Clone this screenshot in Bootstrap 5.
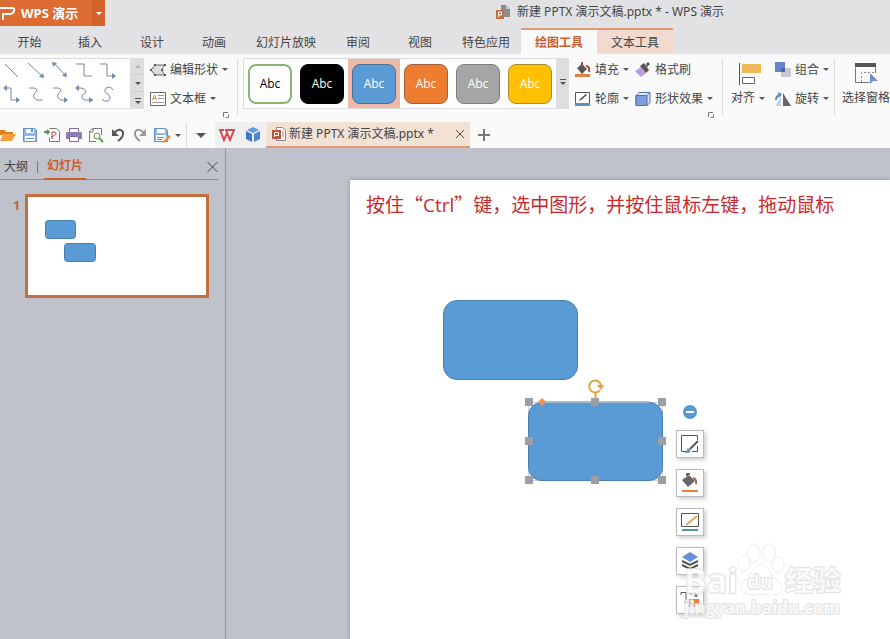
<!DOCTYPE html>
<html lang="zh-CN">
<head>
<meta charset="utf-8">
<meta name="viewport" content="width=device-width, initial-scale=1">
<title>新建 PPTX 演示文稿.pptx - WPS 演示</title>
<link href="https://cdn.jsdelivr.net/npm/bootstrap@5.3.0/dist/css/bootstrap.min.css" rel="stylesheet">
<style>
body{font-family:"Noto Sans","Noto Sans CJK SC",sans-serif;font-size:12px;line-height:16px;color:#444;background:#bfc1cb}
button{font:inherit;color:inherit;background:none;border:0;padding:0;white-space:nowrap}
svg{display:block;flex:none}
.titlebar{height:28px;background:#e2e2e5}
.brand{height:26px;background:#dd6c32;color:#fff;font-weight:700;font-size:13px}
.brand-name{width:92px;gap:4px}
.brand-drop{width:13px;height:26px;background:#d4632b}
.doc-title{margin-left:391px;gap:6px;height:24px}
.menus{background:#e2e2e5;height:26px}
.menus button{width:62px;height:26px;flex:none;border-top:2px solid transparent;padding-top:2px}
.menus .w-first{width:59px}
.menus .w-mid{width:70px}
.menus .w-long{width:82px}
.menus .ctx{width:76px;border-top-color:#df9b76;background:#f2dace}
.menus .ctx.active{background:#fafafa;color:#c9602c;font-weight:700}
.ribbon{background:#fafafa;height:68px;padding-top:4px}
.boxed{height:51px;background:#fff;border:1px solid #dcdcdf}
.steps{width:13px;height:51px;background:#dedee0}
.steps button{height:17px;width:13px;border-bottom:1px solid #cfcfd2}
.caret{width:0;height:0;border:3px solid transparent;border-top-color:#555;border-bottom:0;flex:none}
.caret.big{border-width:5px 5px 0}
.caret.up{border:3px solid transparent;border-top:0;border-bottom-color:#b4b4b8}
.caret.light{border-top-color:#fff}
.caret.bar{position:relative}
.caret.bar::before{content:"";position:absolute;left:-3px;top:-6px;width:6px;height:1px;background:#555}
.cmds{gap:6px}
.cmds-edit{width:79px;padding-left:6px}
.cmds-fill{width:60px;padding-left:0;margin-left:6px}
.cmds-effect{width:73px}
.cmds-group{width:59px}
.cmd{display:flex;align-items:center;gap:4px;height:23px}
.vsep{width:1px;height:58px;background:#dcdcdf;flex:none}
.gallery{margin-left:5px}
.swatch{width:52px;height:49px;flex:none;display:flex;align-items:center;justify-content:center;font-family:"Open Sans",sans-serif}
.swatch span{width:44px;height:40px;border-radius:8px;border:1px solid #6f7681;color:#fff;display:flex;align-items:center;justify-content:center}
.swatch.chosen{background:#efb9a7}
.sw-white span{background:#fff;color:#000;border:2px solid #8bb571}
.sw-black span{background:#000;border-color:#000}
.sw-blue span{background:#5b9bd5;border-color:#4a7198}
.sw-orange span{background:#ed7d31;border-color:#a1633d}
.sw-gray span{background:#a5a5a5;border-color:#7e7e7e}
.sw-gold span{background:#ffc000;border-color:#a88a34}
.launcher{align-self:flex-end;margin-bottom:4px}
.quick{height:26px;background:#fafafa}
.quick-tools{gap:6px;width:186px;flex:none}
.saveas{gap:4px}
.docs{background:#f0f0f2;padding-left:4px;gap:10px;width:51px}
.doc-tab{width:204px;height:26px;background:#f1e2d5;border-bottom:2px solid #dc9a74;padding:0 6px;gap:3px}
.outline{width:226px;border-right:1px solid #9497a3;flex:none}
.outline-tabs{height:32px;padding:3px 0 0 4px;margin-right:7px;border-bottom:1px solid #888b97}
.outline-tabs button{height:29px;padding-top:4px}
.outline-tabs .active{color:#c9602c;font-weight:700;padding:4px 3px 0;border-bottom:2px solid #c9602c}
.bar-mark{width:1px;height:12px;background:#777a85;margin:4px 6px 0 9px}
.thumb{height:104px;border:3px solid #c4703e;background:#fff;width:184px}
.thumb-row{padding-top:14px}
.thumb-num{width:25px;padding:4px 5px 0 0;color:#c0643a;font-weight:700;text-align:right}
.desk{padding:32px 0 0 124px}
.slide{background:#fff;box-shadow:0 0 4px #8b8e99}
.caption-line{font-family:"Noto Sans CJK SC",sans-serif;font-size:19px;line-height:26px;color:#c9282d;padding:11px 0 0 16px;white-space:nowrap}
.caption-line span{font-family:"Open Sans",sans-serif}
.box-shape{position:absolute;left:93px;top:120px;width:135px;height:80px;border-radius:14px;background:#5b9bd5;border:1px solid #4a7eae}
.picked{position:absolute;left:174px;top:196px}
.floaters{position:absolute;left:326px;top:225px;gap:11px}
.floaters .tool{width:28px;height:28px;background:#fff;border:1px solid #b9bbc0;box-shadow:2px 2px 4px #ccc;display:flex;align-items:center;justify-content:center}
.wmark{position:absolute;left:330px;top:358px;font-family:"Open Sans","Noto Sans CJK SC",sans-serif;font-weight:700;pointer-events:none}
</style>
<script src="https://cdn.jsdelivr.net/npm/bootstrap@5.3.0/dist/js/bootstrap.bundle.min.js"></script>
</head>
<body class="d-flex flex-column min-vh-100 overflow-hidden">
<header>
  <div class="titlebar d-flex align-items-start text-nowrap">
    <div class="brand d-flex align-items-center flex-shrink-0">
      <div class="brand-name d-flex align-items-center">
        <svg width="17" height="16" viewBox="0 0 17 16" fill="none" stroke="#fff" stroke-width="2"><path d="M0 3h12q3 0 2 3t-4 3H3v6"/></svg>
        <span>WPS 演示</span>
      </div>
      <button class="brand-drop d-flex align-items-center justify-content-center" aria-label="菜单"><i class="caret light"></i></button>
    </div>
    <div class="doc-title d-flex align-items-center">
      <svg width="15" height="16" viewBox="0 0 15 16"><path d="M5 1h5l4 4v8H5z" fill="#888b90"/><path d="M10 1v4h4" fill="#c9cbd0"/><path d="M0 6h8v9H0z" fill="#c96f42"/><path d="M2.500 13V8h3v3h-3" fill="none" stroke="#fff"/></svg>
      <span>新建 PPTX 演示文稿.pptx * - WPS 演示</span>
    </div>
  </div>
  <nav class="menus d-flex" aria-label="主菜单">
    <button class="w-first">开始</button><button>插入</button><button>设计</button><button>动画</button><button class="w-long">幻灯片放映</button><button>审阅</button><button>视图</button><button class="w-mid">特色应用</button><button class="ctx active">绘图工具</button><button class="ctx">文本工具</button>
  </nav>
  <div class="ribbon d-flex align-items-start">
    <div class="boxed border-start-0 flex-shrink-0">
      <svg width="130" height="49" viewBox="0 0 130 49" fill="none" stroke="#7486a8"><path d="M5 5l13 13M28 4l14 13M55 5l10 11M76 5h8v12h8M100 5h7v12h8M5 29h6v12h8M29 29h5q5 1 1 5t2 7h6M53 29h5q5 1 1 5t2 7h5M78 29h3q8 2 3 6t1 6h8M113 31q-2-4-7-2-3 4 2 6 4 5 0 7-4 1-6-2"/><path d="M44 19l-5-1 4-4zM52 3l5 1-4 4zM67 18l-5-1 4-4zM116 17l-4-3v6zM3 29l4-3v6zM20 41l-4-3v6zM68 41l-4-3v6zM75 29l4-3v6zM93 41l-4-3v6z" fill="#7489ad" stroke="none"/></svg>
    </div>
    <div class="steps d-flex flex-column flex-shrink-0">
      <button class="d-flex align-items-center justify-content-center" aria-label="上一行"><i class="caret up"></i></button>
      <button class="d-flex align-items-center justify-content-center" aria-label="下一行"><i class="caret"></i></button>
      <button class="d-flex align-items-center justify-content-center border-0 pt-1" aria-label="更多形状"><i class="caret bar"></i></button>
    </div>
    <div class="cmds cmds-edit d-flex flex-column flex-shrink-0">
      <button class="cmd"><svg width="16" height="14" viewBox="0 0 16 14"><path d="M1 7l4-5h10q-5 5 0 10H5z" fill="#dcdde2" stroke="#666"/><path d="M4 1h2v2H4zM14 1h2v2h-2zM4 11h2v2H4zM14 11h2v2h-2zM0 6h2v2H0zM11 6h2v2h-2z" fill="#555"/></svg>编辑形状<i class="caret"></i></button>
      <button class="cmd"><svg width="16" height="14" viewBox="0 0 16 14"><path d="M.5.5h15v13H.5z" fill="#fff" stroke="#666"/><path d="M2.500 8l2-5 2 5M3 6.500h3" fill="none" stroke="#dc8b45"/><path d="M8 3.500h6M8 6.500h6M2 10.500h12" stroke="#999"/></svg>文本框<i class="caret"></i></button>
    </div>
    <button class="launcher flex-shrink-0" aria-label="形状设置"><svg width="6" height="6" viewBox="0 0 6 6" fill="none" stroke="#777"><path d="M.5 5V.5H5M5.500 2.500v3h-3"/></svg></button>
    <div class="vsep ms-2"></div>
    <div class="boxed gallery d-flex flex-shrink-0 border-end-0">
      <button class="swatch sw-white"><span>Abc</span></button><button class="swatch sw-black"><span>Abc</span></button><button class="swatch sw-blue chosen"><span>Abc</span></button><button class="swatch sw-orange"><span>Abc</span></button><button class="swatch sw-gray"><span>Abc</span></button><button class="swatch sw-gold"><span>Abc</span></button>
    </div>
    <button class="steps d-flex align-items-center justify-content-center flex-shrink-0" aria-label="更多样式"><i class="caret bar"></i></button>
    <div class="cmds cmds-fill d-flex flex-column flex-shrink-0">
      <button class="cmd"><svg width="16" height="16" viewBox="0 0 16 16"><path d="M2 6l5-4 5 5-5 5z" fill="#555"/><path d="M7 3V0M11 4q4 0 3 6" fill="none" stroke="#a54c38" stroke-width="2"/><path d="M0 12h15v3H0z" fill="#e28042"/></svg>填充<i class="caret"></i></button>
      <button class="cmd"><svg width="16" height="16" viewBox="0 0 16 16"><path d="M.5 12V1.500h14V12" fill="#fff" stroke="#555"/><path d="M4 10l1-2 6-5 1 1-6 5z" fill="#444"/><path d="M0 12h15v3H0z" fill="#5793bd"/></svg>轮廓<i class="caret"></i></button>
    </div>
    <div class="cmds cmds-effect d-flex flex-column flex-shrink-0">
      <button class="cmd"><svg width="16" height="16" viewBox="0 0 16 16"><path d="M0 9l6-4 5 6-5 4z" fill="#bd9bdd"/><path d="M5 4l4-3 5 7-3 3zM11 2l2-2 2 2-3 3z" fill="#555"/></svg>格式刷</button>
      <button class="cmd"><svg width="16" height="16" viewBox="0 0 16 16"><path d="M1 4.500l3-3h11v10l-3 3H1z" fill="#dfe8fa" stroke="#536da6"/><path d="M1 4.500h11v10H1z" fill="#7d9de1" stroke="#536da6"/><path d="M12 4.500l3-3" stroke="#536da6"/></svg>形状效果<i class="caret"></i></button>
    </div>
    <button class="launcher flex-shrink-0 me-2" aria-label="效果设置"><svg width="6" height="6" viewBox="0 0 6 6" fill="none" stroke="#777"><path d="M.5 5V.5H5M5.500 2.500v3h-3"/></svg></button>
    <div class="vsep"></div>
    <button class="flex-shrink-0 text-start ps-2 pt-1" style="width:52px">
      <svg class="ms-2" width="24" height="24" viewBox="0 0 24 24"><path d="M.5 1v22" stroke="#555"/><path d="M3 2h19v9H3z" fill="#efb857"/><path d="M3.500 15.500h12v6h-12z" fill="#fff" stroke="#666"/></svg>
      <span class="d-flex align-items-center gap-1 pt-1">对齐<i class="caret"></i></span>
    </button>
    <div class="cmds cmds-group d-flex flex-column flex-shrink-0">
      <button class="cmd"><svg width="16" height="16" viewBox="0 0 16 16"><path d="M6 6h10v9H6z" fill="#c6c8cd"/><path d="M0 0h10v10H0z" fill="#6484d2"/><path d="M6 6h4v4H6z" fill="#4865a5"/></svg>组合<i class="caret"></i></button>
      <button class="cmd"><svg width="16" height="16" viewBox="0 0 16 16"><path d="M8 2v13h8z" fill="#666"/><path d="M6 6v9H0z" fill="#b9d4ee"/><path d="M1 9q0-4 4-5" fill="none" stroke="#4f8cc3" stroke-width="2"/><path d="M3 1l4 2-3 4z" fill="#4f8cc3"/></svg>旋转<i class="caret"></i></button>
    </div>
    <div class="vsep"></div>
    <button class="flex-shrink-0 pt-1" style="width:62px">
      <svg class="mx-auto" width="24" height="24" viewBox="0 0 24 24"><path d="M1.500 5.500V20.500h14M21.500 5v6" fill="none" stroke="#777"/><path d="M1 1h21v4H1z" fill="#555"/><path d="M7.500 20V10.500H21" fill="none" stroke="#888" stroke-dasharray="2 2"/><path d="M16 11v11l3-3h5z" fill="#6f8fd0"/></svg>
      <span class="d-block pt-1">选择窗格</span>
    </button>
  </div>
  <div class="quick d-flex align-items-center">
    <div class="quick-tools d-flex align-items-center">
      <button aria-label="打开"><svg width="16" height="16" viewBox="0 0 16 16"><path d="M0 3h5l1 2h7v3H0z" fill="#e47d1c"/><path d="M3 7h13l-4 7H0z" fill="#f7a13e"/></svg></button>
      <button aria-label="保存"><svg width="16" height="16" viewBox="0 0 16 16"><path d="M1.500 1.500h11l2 2v11h-13z" fill="#8fb9e5" stroke="#5f92ca"/><path d="M4 2h8v4H4zM3 9h10v5H3z" fill="#fff"/><path d="M9 2h2v3H9zM4 11h8v1H4z" fill="#5f92ca"/></svg></button>
      <button aria-label="输出为PDF"><svg width="16" height="16" viewBox="0 0 16 16"><path d="M5.500 2V1.500h7l3 3v10h-10v-4" fill="#fff" stroke="#777"/><path d="M0 5h5M3 3l2 2-2 2" fill="none" stroke="#5b9a4c" stroke-width="2"/><path d="M8 12V5h2q3 0 2 2t-5 3" fill="none" stroke="#c43d50"/></svg></button>
      <button aria-label="打印"><svg width="16" height="16" viewBox="0 0 16 16"><path d="M3.500 5V1.500h9V5" fill="#fff" stroke="#776aab"/><path d="M1 5h14q1 0 1 2v5H0V7q0-2 1-2" fill="#8b7dbc"/><path d="M3.500 9.500h9v5h-9z" fill="#fff" stroke="#776aab"/></svg></button>
      <button aria-label="打印预览"><svg width="16" height="16" viewBox="0 0 16 16"><path d="M13.500 8V1.500h-9l-3 3v10H8" fill="#fff" stroke="#777"/><path d="M2 5h3V2" fill="none" stroke="#777"/><circle cx="9" cy="9" r="3" fill="#eef7ea" stroke="#5b9a4c"/><path d="M11 11l4 4" stroke="#5b9a4c" stroke-width="2"/></svg></button>
      <button aria-label="撤销"><svg width="16" height="16" viewBox="0 0 16 16"><path d="M4 6q6-6 9-1 1 5-5 9" fill="none" stroke="#555" stroke-width="2"/><path d="M2 2v7h7z" fill="#555"/></svg></button>
      <button aria-label="重做"><svg width="16" height="16" viewBox="0 0 16 16"><path d="M12 6q-6-6-9-1-1 5 5 9" fill="none" stroke="#999" stroke-width="2"/><path d="M14 2v7H7z" fill="#999"/></svg></button>
      <button class="saveas d-flex align-items-center" aria-label="另存为"><svg width="17" height="16" viewBox="0 0 17 16"><path d="M.5 1.500h11l2 2v11H.5z" fill="#8fb9e5" stroke="#5f92ca"/><path d="M3 2h8v4H3zM2 8h10v6H2z" fill="#fff"/><path d="M3 10.500h7M3 12.500h5" stroke="#5f92ca"/><path d="M8 15l7-7 2 2-7 6z" fill="#e2935c"/></svg><i class="caret"></i></button>
    </div>
    <div class="vsep h-100"></div>
    <button class="flex-shrink-0 d-flex justify-content-center" style="width:28px" aria-label="自定义"><i class="caret big"></i></button>
    <div class="docs d-flex align-items-center h-100 flex-shrink-0">
      <button aria-label="首页"><svg width="16" height="14" viewBox="0 0 16 14" fill="none" stroke="#d84a50" stroke-width="2"><path d="M0 2h5M1 2l4 10 3-7 3 7 4-10h-8l4 10"/></svg></button>
      <button aria-label="云文档"><svg width="16" height="16" viewBox="0 0 16 16"><path d="M8 0l6 3-6 3-6-3z" fill="#5c9be8"/><path d="M1 4l6 3v8l-6-3z" fill="#3c7bd3"/><path d="M15 4L9 7v8l6-3z" fill="#4a88dc"/></svg></button>
    </div>
    <div class="doc-tab d-flex align-items-center flex-shrink-0">
      <svg width="14" height="15" viewBox="0 0 14 15"><path d="M4.500.5h6l3 3v10h-9z" fill="#fff" stroke="#888"/><path d="M10 5h2M10 7h2M10 9h2" stroke="#888"/><path d="M0 3h9v9H0z" fill="#bd5238"/><path d="M2.500 10V5.500h4v3h-4" fill="none" stroke="#fff"/></svg>
      <span class="text-nowrap">新建 PPTX 演示文稿.pptx *</span>
      <button class="ms-auto" aria-label="关闭文档"><svg width="8" height="8" viewBox="0 0 8 8" stroke="#555"><path d="M0 0l8 8M8 0L0 8"/></svg></button>
    </div>
    <button class="ms-2 flex-shrink-0" aria-label="新建"><svg width="12" height="12" viewBox="0 0 12 12" stroke="#777" stroke-width="2"><path d="M6 0v12M0 6h12"/></svg></button>
  </div>
</header>
<main class="d-flex flex-grow-1">
  <aside class="outline">
    <div class="outline-tabs d-flex align-items-center">
      <button>大纲</button><i class="bar-mark"></i><button class="active">幻灯片</button>
      <button class="ms-auto" aria-label="关闭窗格"><svg width="11" height="10" viewBox="0 0 11 10" stroke="#444"><path d="M.5 0l10 10M10.500 0L.5 10"/></svg></button>
    </div>
    <div class="thumb-row d-flex align-items-start">
      <div class="thumb-num">1</div>
      <div class="thumb"><svg width="178" height="98" viewBox="0 0 178 98" fill="#5b9bd5" stroke="#4a7eae"><rect x="17.500" y="23.500" width="30" height="18" rx="3"/><rect x="36.500" y="46.500" width="31" height="18" rx="3"/></svg></div>
    </div>
  </aside>
  <section class="desk d-flex flex-grow-1">
    <div class="slide position-relative flex-grow-1">
      <div class="caption-line">按住“<span>Ctrl</span>”键，选中图形，并按住鼠标左键，拖动鼠标</div>
      <div class="box-shape"></div>
      <svg class="picked" width="144" height="110" viewBox="0 0 144 110">
        <rect x="4.500" y="26.500" width="134" height="78" fill="none" stroke="#cfd5dc"/>
        <rect x="4.500" y="26.500" width="134" height="78" rx="13" fill="#5b9bd5" stroke="#4a7eae"/>
        <path d="M17 26h108" stroke="#a4bbd2" stroke-width="2"/>
        <path d="M71.500 16v7" stroke="#e3a43d" stroke-width="2"/><path d="M76 14a6 6 0 1 1 1-5" fill="none" stroke="#e3a43d" stroke-width="2"/><path d="M73 9h7l-3 5z" fill="#e3a43d"/>
        <path d="M1 22h8v8H1zM67 22h8v8h-8zM134 22h8v8h-8zM1 61h8v8H1zM134 61h8v8h-8zM1 100h8v8H1zM67 100h8v8h-8zM134 100h8v8h-8z" fill="#9c9ea6"/>
        <path d="M18 22l4 4-4 4-4-4z" fill="#ee935f"/>
      </svg>
      <div class="floaters d-flex flex-column align-items-center">
        <button aria-label="收起"><svg width="14" height="14" viewBox="0 0 14 14"><circle cx="7" cy="7" r="7" fill="#5b97d7"/><path d="M3 7h8" stroke="#fff" stroke-width="2"/></svg></button>
        <button class="tool" aria-label="形状样式"><svg width="20" height="20" viewBox="0 0 20 20"><path d="M8 17.500H1.500v-16h16V6M17.500 12v5.500H12" fill="none" stroke="#555"/><path d="M18 7l-8 8" stroke="#555" stroke-width="2"/><path d="M5 19l3-5 3 2-2 3z" fill="#6f95bd"/></svg></button>
        <button class="tool" aria-label="填充"><svg width="20" height="20" viewBox="0 0 20 20"><path d="M2 7l7-5 6 6-7 6z" fill="#666"/><path d="M7 3V1h3" fill="none" stroke="#666" stroke-width="2"/><path d="M13 5q4 1 3 6" fill="none" stroke="#b55a48" stroke-width="2"/><path d="M2 17h16v2H2z" fill="#e28042"/></svg></button>
        <button class="tool" aria-label="轮廓"><svg width="20" height="20" viewBox="0 0 20 20"><path d="M1.500 1.500h17v13h-17z" fill="none" stroke="#555"/><path d="M6 13l11-9" stroke="#dfa457" stroke-width="2"/><path d="M2 17h16v2H2z" fill="#5090a8"/></svg></button>
        <button class="tool" aria-label="叠放次序"><svg width="20" height="20" viewBox="0 0 20 20"><path d="M10 1l8 5-8 5-8-5z" fill="#668fdc"/><path d="M2 10l8 4 8-4M2 14l8 4 8-4" fill="none" stroke="#555" stroke-width="2"/></svg></button>
        <button class="tool" aria-label="文字转换"><svg width="20" height="20" viewBox="0 0 20 20"><path d="M1 5V2.500h10V5M6 3v9M4 12h4M13 3h3v4M14 5l2 2 2-2" fill="none" stroke="#555"/><path d="M9 9h10v8h-2v-3h-2v3H9z" fill="#e7803f"/><path d="M11 11h3v2h-3z" fill="#fff"/></svg></button>
      </div>
      <svg class="wmark" width="170" height="90" viewBox="0 0 170 90" fill="#fff" fill-opacity=".7" stroke="#dcdcde" stroke-opacity=".8" stroke-width="2" paint-order="stroke">
        <g stroke-width="1"><ellipse cx="74" cy="15" rx="6" ry="9"/><ellipse cx="89" cy="15" rx="6" ry="9"/><ellipse cx="64" cy="25" rx="6" ry="8"/><ellipse cx="98" cy="27" rx="6" ry="8"/><path d="M81 26q5 0 9 8t10 11-2 11q-6 2-17 0-11 2-17-1-6-5-1-11 6-4 9-10t9-8z"/></g>
        <text x="4" y="55" font-size="34">Bai</text>
        <text x="67" y="51" font-size="20">du</text>
        <text x="105" y="53" font-size="28">经验</text>
        <text x="4" y="76" font-size="17">jingyan.baidu.com</text>
      </svg>
    </div>
  </section>
</main>
</body>
</html>
